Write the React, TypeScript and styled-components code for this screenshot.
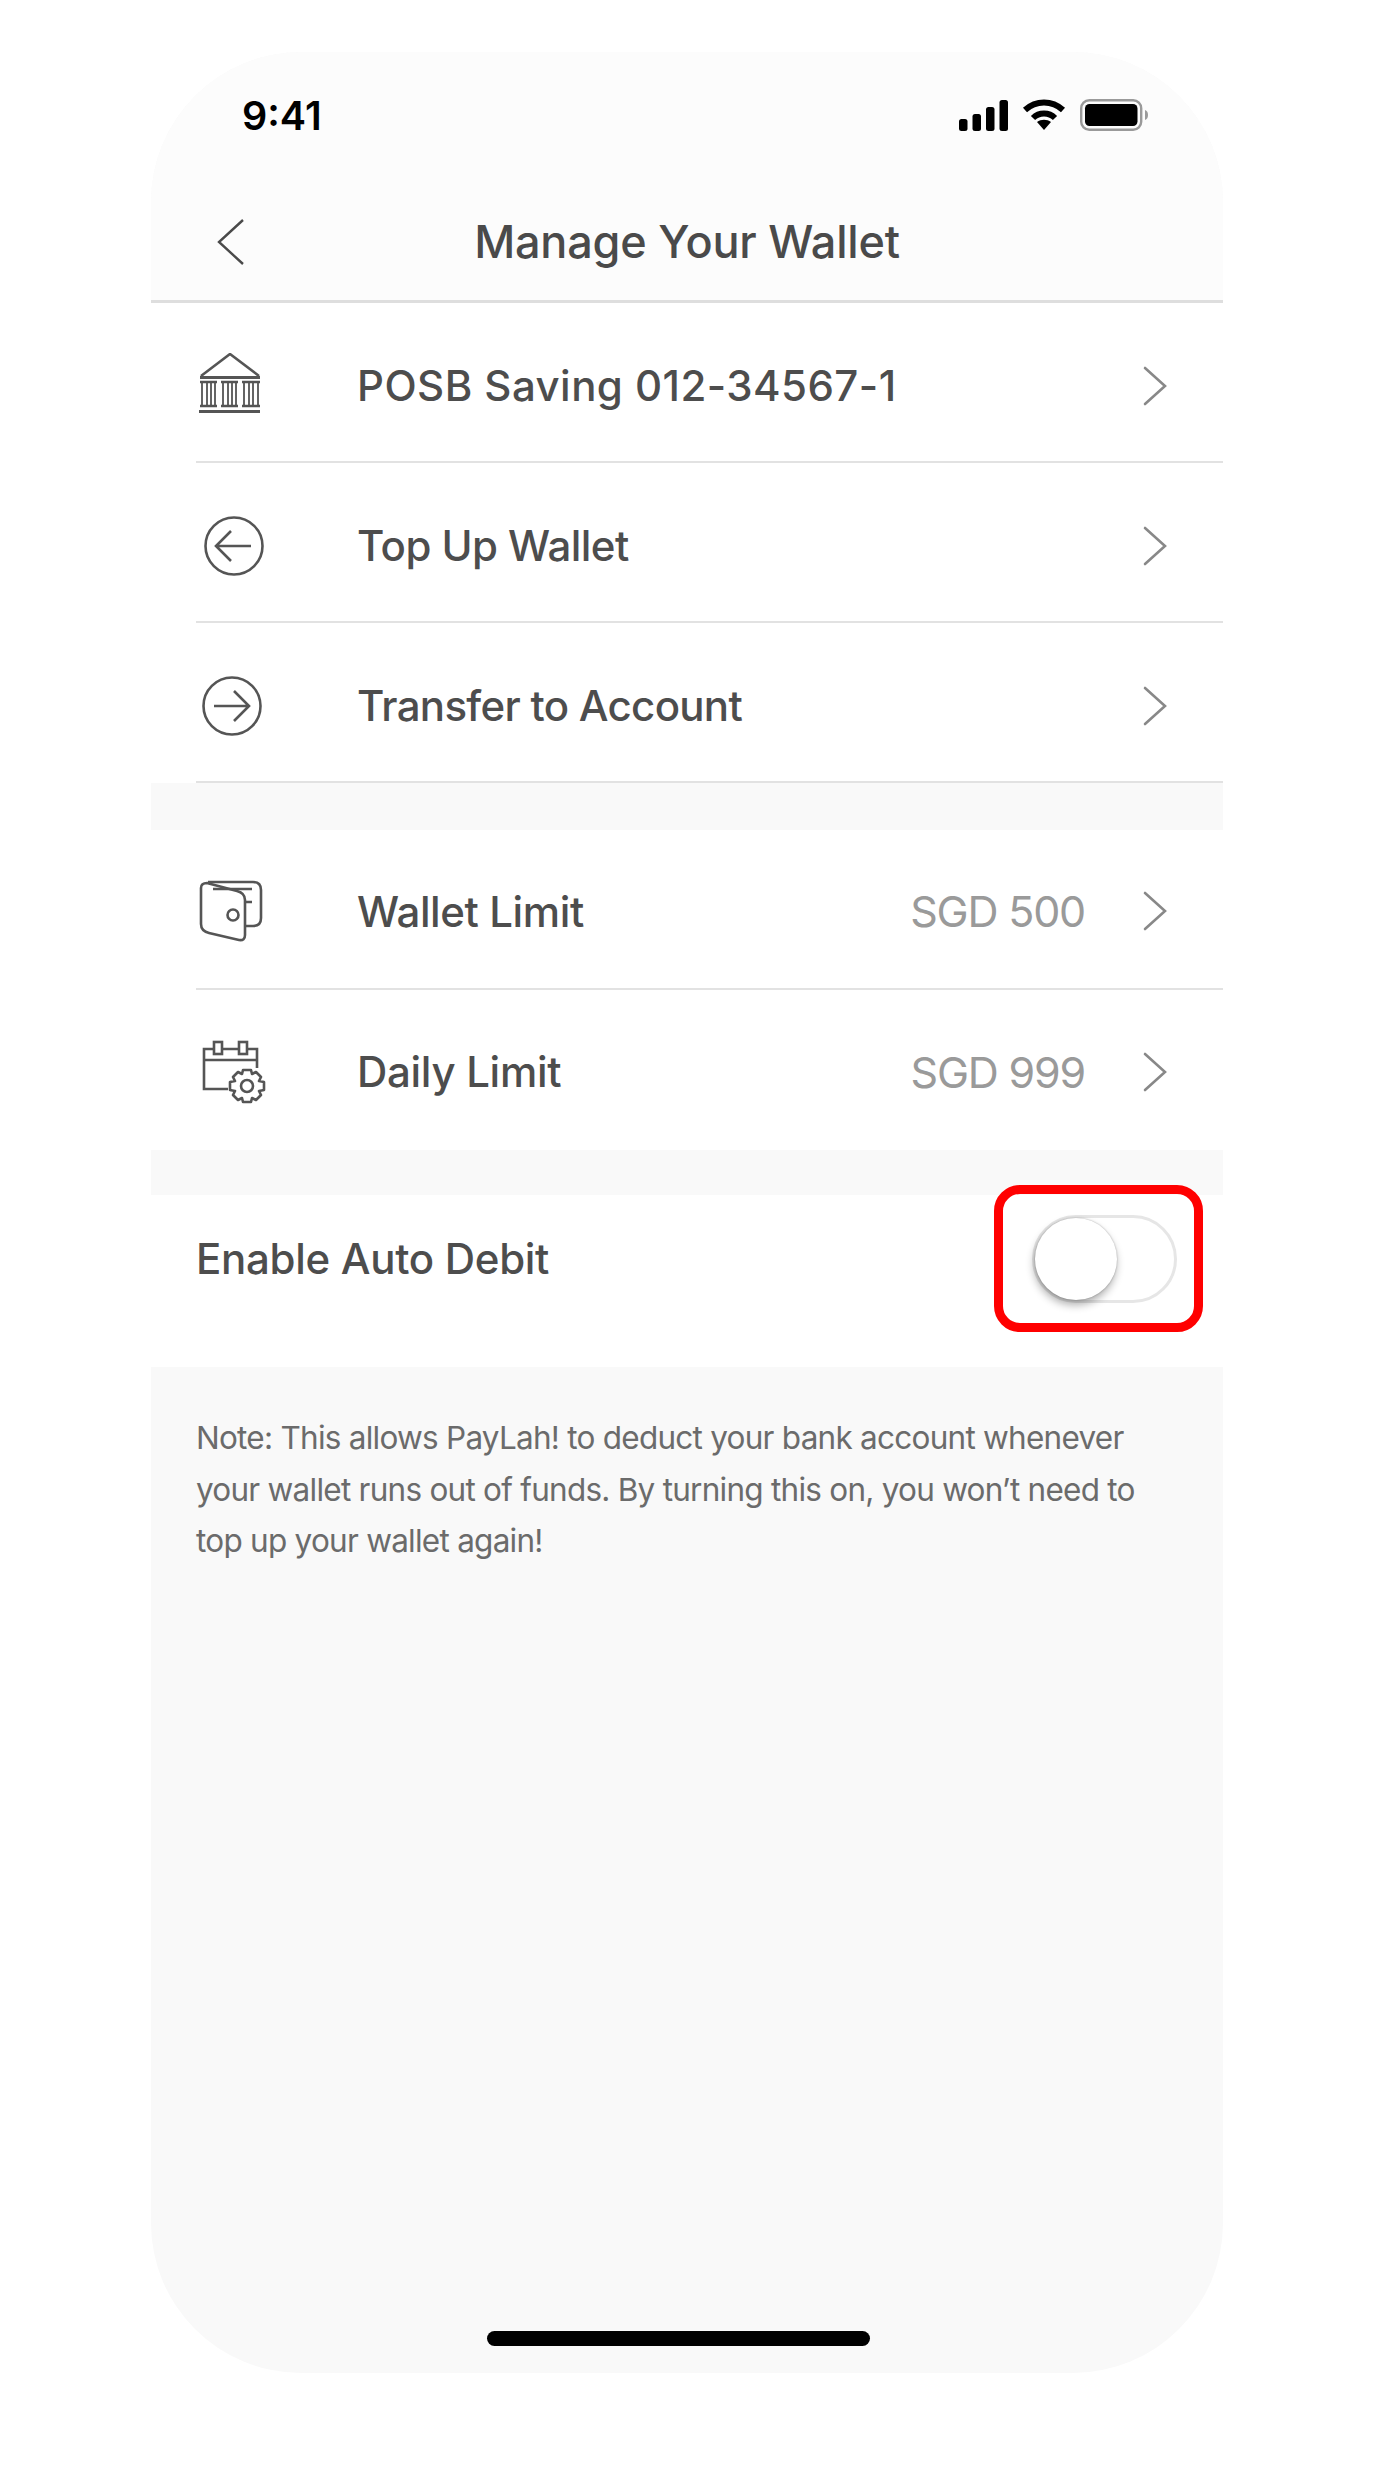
import React from 'react';
import styled, { createGlobalStyle } from 'styled-components';

const GlobalStyle = createGlobalStyle`
  html, body {
    margin: 0;
    padding: 0;
    background: #fff;
    font-family: Inter, 'Liberation Sans', sans-serif;
  }
`;

const Page = styled.div`
  width: 1374px;
  height: 2475px;
  padding: 52px 0 0 151px;
  box-sizing: border-box;
  background: #fff;
`;

const Phone = styled.div`
  width: 1072px;
  height: 2321px;
  border-radius: 150px;
  overflow: hidden;
  background: #f9f9f9;
  display: flex;
  flex-direction: column;
`;

const StatusBar = styled.div`
  height: 126px;
  flex: none;
  background: #fcfcfc;
  display: flex;
  align-items: center;
  justify-content: space-between;
  padding: 0 74px 0 91px;
  box-sizing: border-box;
`;

const Clock = styled.span`
  font-size: 39.5px;
  font-weight: 600;
  color: #000;
  margin-top: 1px;
`;

const StatusIcons = styled.div`
  display: flex;
  align-items: center;
  gap: 14px;
`;

const NavBar = styled.div`
  height: 125px;
  flex: none;
  background: #fcfcfc;
  border-bottom: 3px solid #dedede;
  box-sizing: border-box;
  padding-top: 5px;
  display: flex;
  align-items: center;
`;

const BackButton = styled.div`
  width: 30px;
  height: 46px;
  margin-left: 65px;
  flex: none;
  display: flex;
`;

const NavTitle = styled.h1`
  flex: 1;
  margin: 0 95px 0 0;
  text-align: center;
  font-size: 45px;
  font-weight: 500;
  color: #4a4a4a;
  letter-spacing: -0.2px;
`;

const Group = styled.div`
  background: #fff;
  flex: none;
  padding-left: 45px;
`;

const GroupGap = styled.div<{ $h: number }>`
  height: ${(p) => p.$h}px;
  flex: none;
`;

const Row = styled.div<{ $drop: number; $flush?: boolean }>`
  height: 160px;
  box-sizing: border-box;
  padding-top: ${(p) => p.$drop}px;
  display: flex;
  align-items: center;
  border-bottom: ${(p) => (p.$flush ? '0' : '2px solid #e2e2e2')};
`;

const RowIcon = styled.div<{ $inset: number }>`
  width: 161px;
  box-sizing: border-box;
  padding-left: ${(p) => p.$inset}px;
  flex: none;
  display: flex;
  align-items: center;
`;

const RowLabel = styled.span<{ $spacing: number }>`
  flex: 1;
  font-size: 42px;
  font-weight: 500;
  color: #4d4d4d;
  letter-spacing: ${(p) => p.$spacing}px;
`;

const RowValue = styled.span`
  font-size: 43px;
  font-weight: 400;
  color: #9a9a9a;
  letter-spacing: -1.2px;
  margin-right: 58px;
`;

const Chevron = styled.div`
  width: 24px;
  height: 40px;
  flex: none;
  margin-right: 56px;
  display: flex;
`;

const ToggleRow = styled.div`
  height: 172px;
  flex: none;
  box-sizing: border-box;
  background: #fff;
  padding: 0 0 45px 45px;
  display: flex;
  align-items: center;
  position: relative;
`;

const ToggleLabel = styled.span`
  font-size: 42px;
  font-weight: 500;
  color: #4d4d4d;
  letter-spacing: -0.3px;
`;

const Highlight = styled.div`
  position: absolute;
  left: 843px;
  top: -10px;
  width: 209px;
  height: 147px;
  box-sizing: border-box;
  border: 9px solid #ff0000;
  border-radius: 26px;
`;

const ToggleTrack = styled.div`
  position: absolute;
  left: 881px;
  top: 20px;
  width: 145px;
  height: 88px;
  box-sizing: border-box;
  border: 3px solid #e6e6e6;
  border-radius: 44px;
  background: #fff;
`;

const ToggleKnob = styled.div`
  position: absolute;
  left: 0;
  top: 0;
  width: 82px;
  height: 82px;
  border-radius: 50%;
  background: #fff;
  box-shadow: -1px 5px 9px rgba(0, 0, 0, 0.32), 0 0 2px rgba(0, 0, 0, 0.3);
`;

const Note = styled.p`
  margin: 0;
  padding: 45px 60px 0 45px;
  font-size: 31.5px;
  line-height: 51.5px;
  color: #6b6b6b;
  letter-spacing: -0.75px;
`;

const HomeBar = styled.div`
  width: 383px;
  height: 15px;
  border-radius: 8px;
  background: #000;
  margin: auto 0 27px 336px;
  flex: none;
`;

const Line = { fill: 'none', stroke: '#555', strokeWidth: 2.6 };

const BankIcon = () => (
  <svg width="62" height="66" viewBox="0 0 62 66" {...Line}>
    <path d="M2 23 L31 1 L60 23" />
    <path d="M1 24.5 H61" strokeWidth="3" />
    <path d="M1 29 H18 M22 29 H39 M43 29 H61" />
    <path d="M3 29 V53 M8 29 V53 M12 29 V53 M16 29 V53 M24 29 V53 M29 29 V53 M33 29 V53 M37 29 V53 M45 29 V53 M50 29 V53 M54 29 V53 M59 29 V53" strokeWidth="1.8" />
    <path d="M1 53 H18 M22 53 H39 M43 53 H61" />
    <path d="M0 58.5 H61" strokeWidth="3" />
  </svg>
);

const ArrowCircle = ({ right }: { right?: boolean }) => (
  <svg width="60" height="60" viewBox="0 0 60 60" {...Line}>
    <circle cx="30" cy="30" r="28.5" />
    {right ? (
      <path d="M12 30 H47 M32 15 L47 30 L32 45" />
    ) : (
      <path d="M47 30 H12 M27 15 L12 30 L27 45" />
    )}
  </svg>
);

const WalletIcon = () => (
  <svg width="64" height="62" viewBox="0 0 64 62" {...Line} strokeLinejoin="round">
    <path d="M9 2 H54 Q62 2 62 10 V38 Q62 46 54 46 H46" />
    <path d="M2 8 Q2 3 8 3 L38 11 Q46 13 46 20 V55 Q46 61 40 60 L10 53 Q2 51 2 44 Z" />
    <path d="M14 9 H53 M46 22 H53" />
    <circle cx="34" cy="35" r="5.5" />
  </svg>
);

const CalendarIcon = () => (
  <svg width="64" height="64" viewBox="0 0 64 64" {...Line}>
    <path d="M11 9 H2 V49 H26 M21 9 H36 M46 9 H55 V28 M2 20 H55" />
    <rect x="12" y="2" width="8" height="12" />
    <rect x="37" y="2" width="8" height="12" />
    <circle cx="45" cy="46" r="6" />
    <path d="M41 30 H49 L50 34 L54 32 L59 37 L57 41 L62 42 V50 L57 51 L59 55 L54 60 L50 58 L49 62 H41 L40 58 L36 60 L31 55 L33 51 L28 50 V42 L33 41 L31 37 L36 32 L40 34 Z" strokeLinejoin="round" />
  </svg>
);

const RowChevron = () => (
  <Chevron>
    <svg width="24" height="40" viewBox="0 0 24 40" fill="none" stroke="#888" strokeWidth="2.6" strokeLinecap="round">
      <path d="M2 2 L22 20 L2 38" />
    </svg>
  </Chevron>
);

const CELL_BARS = [
  { x: 0, h: 12 },
  { x: 13.5, h: 17 },
  { x: 27, h: 24 },
  { x: 40.5, h: 31 },
];

const SignalIcon = () => (
  <svg width="49" height="31" viewBox="0 0 49 31">
    {CELL_BARS.map((bar) => (
      <rect key={bar.x} x={bar.x} y={31 - bar.h} width="8.5" height={bar.h} rx="2.5" fill="#000" />
    ))}
  </svg>
);

const WifiIcon = () => (
  <svg width="44" height="32" viewBox="0 0 44 32" fill="none" stroke="#000" strokeWidth="6">
    <path d="M3 11 C14 1 30 1 41 11" />
    <path d="M11 19 C17 13 27 13 33 19" />
    <path d="M15 23 L22 31 L29 23 C25 20 19 20 15 23 Z" fill="#000" stroke="none" />
  </svg>
);

const BatteryIcon = () => (
  <svg width="69" height="32" viewBox="0 0 69 32">
    <rect x="1.2" y="1.2" width="60" height="29.6" rx="8" fill="none" stroke="#9a9a9a" strokeWidth="2.4" />
    <rect x="5" y="5" width="52.5" height="22" rx="4.5" fill="#000" />
    <path d="M65 11 C69 12 69 20 65 21 Z" fill="#9a9a9a" />
  </svg>
);

const App = () => (
  <Page>
    <GlobalStyle />
    <Phone>
      <StatusBar>
        <Clock>9:41</Clock>
        <StatusIcons>
          <SignalIcon />
          <WifiIcon />
          <BatteryIcon />
        </StatusIcons>
      </StatusBar>
      <NavBar>
        <BackButton>
          <svg width="30" height="46" viewBox="0 0 30 46" fill="none" stroke="#4a4a4a" strokeWidth="2.4">
            <path d="M27 1 L3 23 L27 45" />
          </svg>
        </BackButton>
        <NavTitle>Manage Your Wallet</NavTitle>
      </NavBar>

      <Group>
        <Row $drop={7}>
          <RowIcon $inset={3}><BankIcon /></RowIcon>
          <RowLabel $spacing={0.45}>POSB Saving 012-34567-1</RowLabel>
          <RowChevron />
        </Row>
        <Row $drop={7}>
          <RowIcon $inset={8}><ArrowCircle /></RowIcon>
          <RowLabel $spacing={-0.55}>Top Up Wallet</RowLabel>
          <RowChevron />
        </Row>
        <Row $drop={7}>
          <RowIcon $inset={6}><ArrowCircle right /></RowIcon>
          <RowLabel $spacing={-0.7}>Transfer to Account</RowLabel>
          <RowChevron />
        </Row>
      </Group>
      <GroupGap $h={47} />
      <Group>
        <Row $drop={4}>
          <RowIcon $inset={3}><WalletIcon /></RowIcon>
          <RowLabel $spacing={-0.4}>Wallet Limit</RowLabel>
          <RowValue>SGD 500</RowValue>
          <RowChevron />
        </Row>
        <Row $drop={3} $flush>
          <RowIcon $inset={6}><CalendarIcon /></RowIcon>
          <RowLabel $spacing={-0.3}>Daily Limit</RowLabel>
          <RowValue>SGD 999</RowValue>
          <RowChevron />
        </Row>
      </Group>
      <GroupGap $h={45} />
      <ToggleRow>
        <ToggleLabel>Enable Auto Debit</ToggleLabel>
        <ToggleTrack>
          <ToggleKnob />
        </ToggleTrack>
        <Highlight />
      </ToggleRow>
      <Note>
        Note: This allows PayLah! to deduct your bank account whenever your wallet runs out of funds. By turning this on, you won’t need to top up your wallet again!
      </Note>
      <HomeBar />
    </Phone>
  </Page>
);

export default App;
